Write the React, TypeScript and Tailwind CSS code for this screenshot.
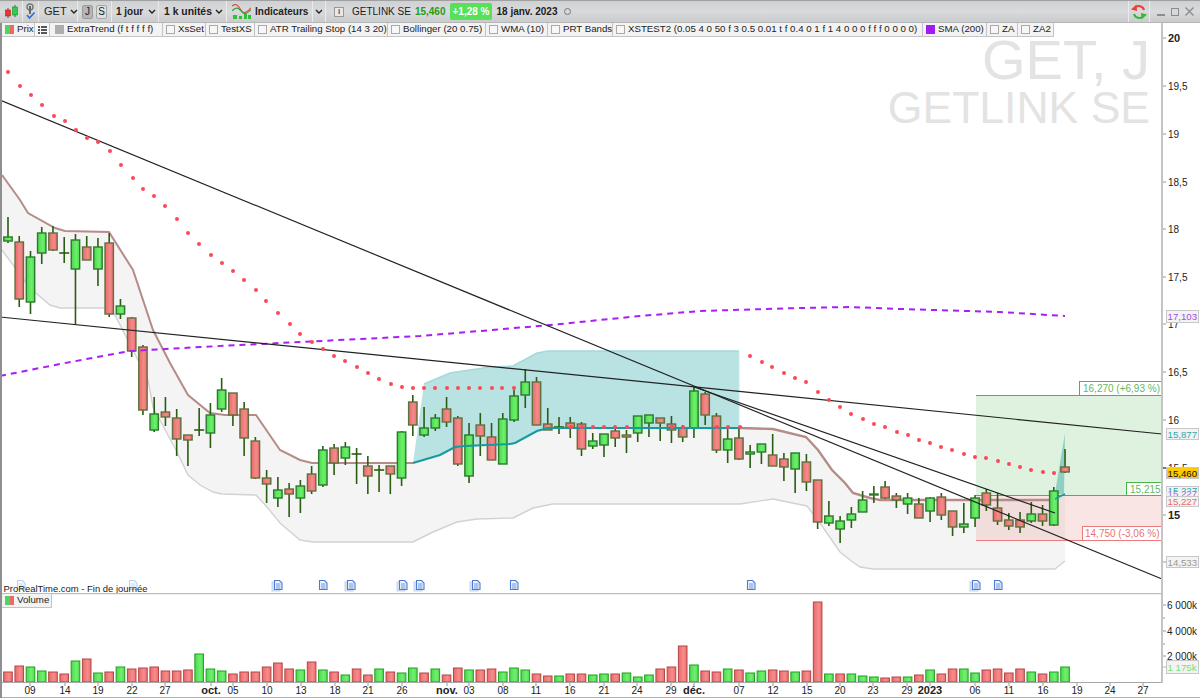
import React from "react";

const FONT = { fontFamily: '"Liberation Sans", Arial, sans-serif' };

const xOf = (i: number) => 8 + i * 11.245;

// wick top, body top, body bottom, wick bottom, colour (d = doji)
const candles: [number, number, number, number, string][] = [
  [217, 237, 241, 243, "g"], [236, 242, 299, 307, "r"], [251, 257, 302, 314, "g"], [227, 233, 253, 264, "g"],
  [226, 233, 250, 251, "r"], [237, 253, 253, 263, "d"], [234, 240, 269, 324, "g"], [236, 247, 260, 260, "r"],
  [238, 247, 269, 286, "g"], [233, 243, 314, 317, "r"], [299, 306, 314, 319, "g"], [317, 318, 351, 357, "r"],
  [345, 347, 410, 415, "r"], [397, 414, 430, 432, "g"], [397, 412, 417, 426, "r"], [409, 418, 439, 456, "r"],
  [435, 435, 440, 466, "r"], [408, 430, 430, 436, "d"], [403, 415, 433, 448, "g"], [378, 390, 409, 412, "g"],
  [393, 393, 415, 426, "r"], [402, 409, 438, 456, "r"], [437, 441, 478, 479, "r"], [470, 478, 484, 503, "r"],
  [477, 490, 498, 507, "g"], [483, 489, 494, 517, "r"], [480, 486, 498, 513, "g"], [466, 474, 491, 494, "r"],
  [446, 450, 485, 487, "g"], [444, 448, 463, 475, "r"], [442, 447, 458, 465, "g"], [448, 454, 454, 484, "d"],
  [456, 466, 476, 494, "r"], [465, 470, 470, 492, "d"], [466, 466, 474, 494, "r"], [431, 432, 478, 486, "g"],
  [395, 402, 425, 436, "r"], [407, 428, 435, 437, "g"], [414, 418, 428, 431, "g"], [397, 409, 422, 427, "r"],
  [416, 418, 464, 466, "r"], [423, 435, 476, 483, "g"], [413, 425, 436, 456, "r"], [423, 437, 460, 460, "r"],
  [413, 419, 464, 464, "g"], [390, 396, 420, 422, "g"], [369, 382, 395, 408, "g"], [377, 382, 425, 425, "r"],
  [408, 424, 430, 430, "r"], [417, 427, 427, 434, "d"], [417, 423, 428, 438, "r"], [422, 424, 449, 456, "r"],
  [433, 441, 446, 449, "g"], [434, 434, 445, 457, "g"], [428, 431, 438, 447, "r"], [430, 435, 437, 453, "r"],
  [416, 416, 433, 442, "g"], [415, 415, 423, 437, "g"], [418, 418, 423, 441, "r"], [416, 424, 430, 443, "r"],
  [425, 428, 437, 442, "r"], [387, 391, 428, 438, "g"], [392, 394, 415, 425, "r"], [413, 416, 450, 453, "r"],
  [427, 439, 450, 463, "g"], [427, 438, 459, 460, "r"], [445, 452, 454, 468, "g"], [444, 444, 452, 464, "g"],
  [434, 455, 466, 466, "r"], [453, 459, 467, 481, "r"], [453, 453, 469, 493, "g"], [454, 462, 482, 491, "r"],
  [480, 480, 522, 529, "r"], [501, 516, 523, 526, "g"], [516, 521, 529, 543, "g"], [507, 514, 520, 528, "g"],
  [491, 500, 512, 512, "g"], [486, 494, 495, 503, "g"], [481, 487, 498, 499, "r"], [493, 496, 500, 508, "r"],
  [493, 498, 504, 514, "g"], [498, 504, 518, 518, "r"], [497, 498, 511, 522, "g"], [493, 497, 515, 520, "r"],
  [511, 511, 527, 536, "r"], [503, 524, 527, 533, "g"], [495, 498, 518, 527, "g"], [489, 493, 505, 511, "r"],
  [493, 508, 521, 525, "r"], [513, 520, 526, 530, "r"], [512, 520, 527, 533, "r"], [502, 514, 521, 523, "g"],
  [505, 514, 521, 526, "r"], [487, 491, 525, 526, "g"], [449, 467, 472, 473, "r"],
];

// volume bar tops, colour
const volumes: [number, string][] = [
  [672, "r"], [666, "r"], [667, "g"], [671, "g"], [672, "r"], [674, "r"], [661, "g"], [659, "r"], [673, "g"], [672, "r"],
  [667, "g"], [669, "r"], [668, "r"], [667, "r"], [671, "r"], [671, "r"], [670, "r"], [654, "g"], [669, "g"], [671, "g"],
  [674, "r"], [672, "r"], [672, "r"], [667, "r"], [663, "r"], [669, "r"], [670, "g"], [662, "r"], [670, "g"], [672, "r"],
  [675, "g"], [669, "r"], [675, "r"], [669, "g"], [672, "r"], [673, "g"], [668, "g"], [673, "r"], [669, "g"], [675, "r"],
  [668, "r"], [670, "g"], [670, "r"], [669, "r"], [672, "g"], [668, "g"], [670, "g"], [674, "r"], [676, "r"], [676, "g"],
  [674, "r"], [674, "r"], [675, "g"], [674, "g"], [674, "r"], [673, "g"], [677, "g"], [675, "g"], [669, "r"], [667, "r"],
  [646, "r"], [665, "g"], [671, "r"], [672, "r"], [669, "g"], [670, "r"], [673, "g"], [671, "g"], [670, "r"], [671, "r"],
  [672, "g"], [671, "r"], [602, "r"], [674, "g"], [674, "r"], [674, "g"], [676, "g"], [677, "g"], [678, "r"], [677, "r"],
  [677, "g"], [675, "r"], [670, "g"], [674, "r"], [669, "r"], [669, "g"], [673, "g"], [670, "r"], [669, "r"], [673, "r"],
  [669, "r"], [672, "g"], [674, "r"], [672, "g"], [667, "g"],
];

const upper = "2,175 20,200 28,213 55,228 65,231 109,232 133,270 153,330 170,363 188,395 210,413 225,415 256,415 280,450 300,460 312,463 413,463";
const teal = "413,463 440,455 455,447 465,446 510,444 515,443 537,431 548,428 740,428";
const upperEnd = "740,428 773,429 806,437 818,450 832,470 845,483 853,493 870,498 880,500 1055,500";
const lower = "2,250 30,288 50,305 60,308 109,308 115,315 148,380 153,407 177,452 188,475 200,485 213,492 222,494 256,495 267,507 280,523 300,540 313,542 413,542 433,532 457,522 477,519 513,518 533,508 553,504 740,504 773,499 807,506 820,523 840,552 850,560 860,567 873,569 1055,569 1065,561";
const cloud = "413,463 424,384 450,373 490,367 513,366 537,353 548,351 739,351 739,428 548,428 537,431 515,443 510,444 465,446 455,447 440,455";
const sma = "0,376 60,364 130,351 200,347 300,342 420,336 480,331 550,325 640,316 700,311 800,308 850,307 900,309 1000,312 1065,316";

const dotsA = [
  [8, 72], [20, 86], [31, 95], [42, 105], [54, 116], [65, 121], [76, 130], [87, 138], [98, 142], [110, 151], [121, 165], [133, 178], [143, 189], [154, 196], [165, 206],
  [177, 219], [188, 233], [199, 244], [211, 255], [222, 263], [233, 271], [244, 280], [256, 290], [266, 301], [278, 313], [290, 324], [300, 334],
  [312, 342], [323, 349], [334, 356], [345, 361], [357, 367], [368, 373], [379, 379], [391, 384], [402, 387],
  [413, 388], [424, 388], [435, 388], [447, 388], [458, 388], [469, 388], [480, 388], [492, 388], [502, 388], [514, 388],
  [571, 427], [582, 427], [593, 427], [604, 427], [615, 427], [627, 427], [672, 427], [683, 427], [717, 427], [728, 427], [740, 427],
  [750, 356], [762, 362], [772, 367], [784, 373], [795, 378], [806, 382], [818, 392], [829, 400], [840, 407], [851, 414], [863, 419], [874, 424],
  [885, 427], [897, 432], [908, 435], [919, 440], [930, 443], [941, 447], [952, 450], [964, 454], [975, 457], [986, 458], [998, 461], [1009, 464], [1020, 467], [1031, 470], [1043, 472], [1054, 473],
];

const priceAxis: [string, number, boolean][] = [
  ["20", 38, true], ["19,5", 86, false], ["19", 134, false], ["18,5", 182, false], ["18", 229, false], ["17,5", 277, false],
  ["17", 324, false], ["16,5", 372, false], ["16", 420, false], ["15,5", 468, false], ["15", 515, true],
];

const dates: [string, number, boolean][] = [
  ["09", 30, false], ["14", 65, false], ["19", 98, false], ["22", 132, false], ["27", 165, false], ["oct.", 211, true], ["05", 233, false],
  ["10", 267, false], ["13", 301, false], ["18", 335, false], ["21", 368, false], ["26", 402, false], ["nov.", 447, true], ["03", 469, false],
  ["08", 503, false], ["11", 536, false], ["16", 570, false], ["21", 604, false], ["24", 637, false], ["29", 671, false], ["déc.", 694, true],
  ["07", 739, false], ["12", 773, false], ["15", 807, false], ["20", 840, false], ["23", 873, false], ["29", 907, false], ["2023", 930, true],
  ["06", 975, false], ["11", 1009, false], ["16", 1043, false], ["19", 1077, false], ["24", 1110, false], ["27", 1143, false],
];

const notes: [number, boolean][] = [
  [278, true], [323, false], [351, true], [403, true], [420, true], [476, true], [514, false], [751, false], [976, true], [998, false],
];

function Note({ x, double }: { x: number; double: boolean }) {
  return (
    <g transform={`translate(${x - 4} 580)`}>
      {double && <rect x={-2} y={2} width={8} height={9} fill="#dbe6f8" stroke="#b5cbee" strokeWidth={0.8} />}
      <path d="M0.5 0.5H5.5L8 3V9.5H0.5Z" fill="#eef3fc" stroke="#4a7bd6" strokeWidth={1.1} />
      <path d="M2 4H6.5M2 6H6.5M2 8H6.5" stroke="#4a7bd6" strokeWidth={0.8} />
    </g>
  );
}

function Chart() {
  return (
    <svg viewBox="0 23 1200 570" className="block h-[570px] w-[1200px]" style={FONT}>
      <defs>
        <linearGradient id="gb">
          <stop offset="0" stopColor="#4bd64b" />
          <stop offset="0.6" stopColor="#6cf06c" />
          <stop offset="1" stopColor="#50dc50" />
        </linearGradient>
        <linearGradient id="rb">
          <stop offset="0" stopColor="#e86a6a" />
          <stop offset="0.6" stopColor="#f58a8a" />
          <stop offset="1" stopColor="#e86e6e" />
        </linearGradient>
      </defs>

      <text x={1150} y={79} textAnchor="end" fontSize={56} fill="#e3e3e3">GET, J</text>
      <text x={1150} y={123} textAnchor="end" fontSize={44.5} fill="#e3e3e3">GETLINK SE</text>

      <polygon points={`${upper} ${teal.split(" ").slice(1).join(" ")} ${upperEnd.split(" ").slice(1).join(" ")} 1065,495 ${lower.split(" ").reverse().join(" ")}`} fill="#f4f4f4" />
      <polyline points={lower} fill="none" stroke="#d2d2d2" strokeWidth={1.4} />

      <polygon points={cloud} fill="#b9e3e3" />
      <polyline points="424,384 450,373 490,367 513,366 537,353 548,351 739,351" fill="none" stroke="#a5d9d9" strokeWidth={1.5} />
      <line x1={739} y1={351} x2={739} y2={428} stroke="#c6eaea" strokeWidth={1} />

      <rect x={976} y={395} width={186} height={100} fill="#dff2df" />
      <rect x={976} y={495} width={186} height={45} fill="#f0a8a8" fillOpacity={0.3} />
      <line x1={976} y1={395.5} x2={1162} y2={395.5} stroke="#47b847" />
      <line x1={976} y1={495.5} x2={1162} y2={495.5} stroke="#47b847" />
      <line x1={976} y1={540.5} x2={1162} y2={540.5} stroke="#ec7a7a" />
      <polygon points="1055,493 1065,433 1064,495" fill="#8fd0c4" />

      <polyline points={upper} fill="none" stroke="#b58c88" strokeWidth={2} />
      <polyline points={upperEnd} fill="none" stroke="#b58c88" strokeWidth={2.4} />

      {candles.map(([wt, bt, bb, wb, c], i) => {
        const x = xOf(i);
        return (
          <g key={i}>
            <line x1={x} y1={wt} x2={x} y2={wb} stroke="#2a5c12" strokeWidth={1.6} />
            {c === "d" ? (
              <line x1={x - 5} y1={bt} x2={x + 5} y2={bt} stroke="#2a5c12" strokeWidth={1.6} />
            ) : (
              <rect
                x={x - 4.2}
                y={bt}
                width={8.4}
                height={bb - bt}
                fill={c === "g" ? "url(#gb)" : "url(#rb)"}
                stroke={c === "g" ? "#2c7a2c" : "#60703c"}
                strokeWidth={1.4}
              />
            )}
          </g>
        );
      })}

      <polyline points={teal} fill="none" stroke="#159a9f" strokeWidth={2} />
      <polyline points="1055,499 1065,494" fill="none" stroke="#159a9f" strokeWidth={1.5} />

      <polyline points={sma} fill="none" stroke="#a81ff5" strokeWidth={2} strokeDasharray="6 5" />

      <line x1={0} y1={100} x2={1162} y2={579} stroke="#222" strokeWidth={1.2} />
      <line x1={0} y1={317} x2={1162} y2={434} stroke="#222" strokeWidth={1.2} />
      <line x1={694} y1={387} x2={1055} y2={513} stroke="#222" strokeWidth={1.2} />

      {dotsA.map(([x, y], i) => (
        <circle key={i} cx={x} cy={y} r={2} fill="#ff4757" />
      ))}

      <g opacity={0.35}>
        <Note x={21} double={false} />
        <Note x={133} double={false} />
      </g>
      {notes.map(([x, d], i) => (
        <Note key={i} x={x} double={d} />
      ))}
      <text x={3.5} y={592} fontSize={9.45} fill="#222">ProRealTime.com - Fin de journée</text>

      <rect x={1079.5} y={381.5} width={82} height={14} fill="#fff" stroke="#47b847" />
      <text x={1083} y={392} fontSize={10} fill="#63b863">16,270 (+6,93 %)</text>
      <rect x={1126.5} y={482.5} width={35} height={13} fill="#fff" stroke="#47b847" />
      <text x={1130} y={492.5} fontSize={10} fill="#63b863">15,215</text>
      <rect x={1082.5} y={526.5} width={79} height={14} fill="#fff" stroke="#ec7a7a" />
      <text x={1085} y={537} fontSize={10} fill="#ea7272">14,750 (-3,06 %)</text>

      <rect x={1162} y={23} width={38} height={570} fill="#fff" />
      <rect x={1161} y={23} width={2} height={570} fill="#c4c4c4" />
      {priceAxis.map(([t, y, b]) => (
        <g key={t}>
          <line x1={1163} y1={y} x2={1166} y2={y} stroke="#999" />
          <text x={1168} y={y + 4} fontSize={b ? 11 : 10} fontWeight={b ? 700 : 400} fill="#222">{t}</text>
        </g>
      ))}
      <line x1={1163} y1={468} x2={1166} y2={468} stroke="#222" />
      <line x1={1163} y1={562} x2={1166} y2={562} stroke="#999" />

      <rect x={1166.5} y={310.5} width={32} height={12} fill="#f3f3f3" stroke="#c8c8c8" />
      <text x={1167.5} y={320} fontSize={9.7} fill="#a84ae8">17,103</text>
      <rect x={1166.5} y={428.5} width={32} height={11} fill="#f3f3f3" stroke="#c8c8c8" />
      <text x={1167.5} y={438} fontSize={9.7} fill="#2ea8ad">15,877</text>
      <rect x={1166.5} y={486.5} width={32} height={9} fill="#f3f3f3" stroke="#c8c8c8" />
      <text x={1167.5} y={494} fontSize={9.7} fill="#2ea8ad">15,227</text>
      <rect x={1166.5} y={491.5} width={32} height={5} fill="#f3f3f3" />
      <text x={1167.5} y={497} fontSize={9.7} fill="#8a6ae8">15,227</text>
      <rect x={1166.5} y={496.5} width={32} height={10} fill="#f3f3f3" stroke="#c8c8c8" />
      <text x={1167.5} y={505} fontSize={9.7} fill="#ea6a6a">15,227</text>
      <rect x={1166.5} y={467.5} width={32} height={11} fill="#ffcb05" stroke="#c8c8c8" />
      <text x={1167.5} y={477} fontSize={9.7} fill="#111">15,460</text>
      <rect x={1166.5} y={556.5} width={32} height={11} fill="#f3f3f3" stroke="#c8c8c8" />
      <text x={1167.5} y={566} fontSize={9.7} fill="#999">14,533</text>
    </svg>
  );
}

function Volume() {
  return (
    <svg viewBox="0 593 1200 105" className="block h-[105px] w-[1200px]" style={FONT}>
      <defs>
        <linearGradient id="vg">
          <stop offset="0" stopColor="#4fd84f" />
          <stop offset="0.6" stopColor="#70f070" />
          <stop offset="1" stopColor="#50dc50" />
        </linearGradient>
        <linearGradient id="vr">
          <stop offset="0" stopColor="#e96a6a" />
          <stop offset="0.6" stopColor="#f78c8c" />
          <stop offset="1" stopColor="#e86e6e" />
        </linearGradient>
      </defs>
      <line x1={0} y1={593.5} x2={1162} y2={593.5} stroke="#bdbdbd" strokeWidth={1.5} />
      {volumes.map(([t, c], i) => (
        <rect
          key={i}
          x={xOf(i) - 4.3}
          y={t}
          width={8.6}
          height={682 - t}
          fill={c === "g" ? "url(#vg)" : "url(#vr)"}
          stroke={c === "g" ? "#1f9f1f" : "#b54545"}
          strokeWidth={1}
        />
      ))}
      <line x1={0} y1={682.5} x2={1162} y2={682.5} stroke="#a8a8a8" />
      <rect x={1161} y={593} width={2} height={90} fill="#c4c4c4" />
      {[618, 644].map((y) => (
        <line key={y} x1={1163} y1={y} x2={1165} y2={y} stroke="#999" />
      ))}
      {[["6 000k", 605], ["4 000k", 631], ["2 000k", 656]].map(([t, y]) => (
        <g key={t as string}>
          <line x1={1163} y1={y as number} x2={1166} y2={y as number} stroke="#999" />
          <text x={1167} y={(y as number) + 4} fontSize={10} fill="#222">{t}</text>
        </g>
      ))}
      <line x1={1163} y1={667} x2={1166} y2={667} stroke="#77dd77" />
      <rect x={1166.5} y={660.5} width={32} height={13} fill="#f3f3f3" stroke="#c8c8c8" />
      <text x={1167.5} y={671} fontSize={9.7} fill="#7ae07a">1 175k</text>
      {dates.map(([t, x, b]) => (
        <g key={t + x}>
          <line x1={x} y1={683} x2={x} y2={686} stroke="#999" />
          <text x={x} y={694} textAnchor="middle" fontSize={b ? 11 : 10} fontWeight={b ? 700 : 400} fill="#222">{t}</text>
        </g>
      ))}
      <line x1={0} y1={697.5} x2={1200} y2={697.5} stroke="#b0b0b0" />
    </svg>
  );
}

function Swatch() {
  return (
    <span className="flex h-[9px] w-[9px] shrink-0">
      <span className="w-1/2 bg-[#4fd65a]" />
      <span className="w-1/2 bg-[#ea6a6a]" />
    </span>
  );
}

function Box() {
  return <span className="h-[9px] w-[9px] shrink-0 border border-[#aaaaaa] bg-[#f7f7f7]" />;
}

function Legend({ w, mark, label }: { w: string; mark: React.ReactNode; label?: string }) {
  return (
    <div className={`flex h-[14px] shrink-0 items-center gap-[3px] overflow-hidden whitespace-nowrap border-r border-b border-[#c4c4c4] bg-[#f3f3f3] pl-[3px] ${w}`}>
      {mark}
      {label && <span>{label}</span>}
    </div>
  );
}

function Chevron() {
  return (
    <svg width="8" height="5" viewBox="0 0 8 5" className="shrink-0">
      <path d="M1 1L4 4L7 1" fill="none" stroke="#222" strokeWidth="1.4" />
    </svg>
  );
}

function ToolbarSeg({ w, children, className = "" }: { w: string; children?: React.ReactNode; className?: string }) {
  return (
    <div className={`flex h-full shrink-0 items-center border-r border-[#e9eaea] ${w} ${className}`}>{children}</div>
  );
}

export default function App() {
  return (
    <div className="relative flex h-[698px] w-[1200px] flex-col overflow-hidden bg-white text-[#222]" style={FONT}>
      {/* Top toolbar */}
      <div className="flex h-[23px] shrink-0 items-center border-t border-b border-t-[#9ea0a2] border-b-[#b4b6b8] bg-gradient-to-b from-[#cfd1d2] via-[#d9dadb] to-[#c9cbcc] text-[10px]">
        <ToolbarSeg w="w-[23px]" className="justify-center">
          <svg width="15" height="14" viewBox="0 0 15 14">
            <path d="M4 3V13M11 0V12" stroke="#555" strokeWidth="1" />
            <rect x="1.5" y="5" width="5" height="6" fill="#ee3333" stroke="#a22" strokeWidth="0.6" />
            <rect x="8.5" y="2" width="5" height="8" fill="#33cc44" stroke="#1a8a2a" strokeWidth="0.6" />
          </svg>
        </ToolbarSeg>
        <ToolbarSeg w="w-[16px]" className="justify-center">
          <svg width="11" height="17" viewBox="0 0 11 17">
            <circle cx="5" cy="4" r="3" fill="none" stroke="#777" strokeWidth="1.4" />
            <path d="M5 3V11" stroke="#666" strokeWidth="2" />
            <path d="M2 12L4.5 15L9.5 9.5" fill="none" stroke="#2a6fd6" strokeWidth="1.6" />
          </svg>
        </ToolbarSeg>
        <ToolbarSeg w="w-[39px]" className="gap-[3px] pl-[5px]">
          <span className="text-[11px]">GET</span>
          <Chevron />
        </ToolbarSeg>
        <ToolbarSeg w="w-[34px]" className="gap-[3px] pl-[4px]">
          <span className="flex h-[14px] w-[11px] items-center justify-center rounded-[2px] border border-[#9a9a9a] bg-[#b4b6b8] text-[10px]">J</span>
          <span className="flex h-[14px] w-[11px] items-center justify-center rounded-[2px] border border-[#a6a6a6] bg-[#dedfe0] text-[10px]">S</span>
        </ToolbarSeg>
        <ToolbarSeg w="w-[47px]" className="gap-[5px] pl-[4px] font-bold">
          <span>1 jour</span>
          <Chevron />
        </ToolbarSeg>
        <ToolbarSeg w="w-[68px]" className="gap-[3px] pl-[5px] font-bold">
          <span className="text-[10.4px] whitespace-nowrap">1 k unités</span>
          <Chevron />
        </ToolbarSeg>
        <ToolbarSeg w="w-[86px]" className="gap-[4px] pl-[5px] font-bold">
          <svg width="19" height="17" viewBox="0 0 19 17" className="shrink-0">
            <path d="M0 3C4 0 6 2 9 7S15 9 19 5" fill="none" stroke="#e04a3a" strokeWidth="1.2" />
            <path d="M0 8C4 3 7 5 10 9S16 9 19 7" fill="none" stroke="#3aa050" strokeWidth="1.2" />
            <path d="M1 16V12H5V16ZM7 16V13H10V16ZM12 16V11H15V16ZM16 16V12H19V16Z" fill="#2fbf3a" />
          </svg>
          <span>Indicateurs</span>
        </ToolbarSeg>
        <ToolbarSeg w="w-[13px]" className="justify-center">
          <Chevron />
        </ToolbarSeg>
        <div className="flex h-full min-w-0 flex-1 items-center gap-[4px] whitespace-nowrap pl-[8px]">
          <span className="mr-[4px] flex h-[10px] w-[10px] items-center justify-center border border-[#999] bg-[#e8e8e8] text-[8px] font-bold text-[#555]">i</span>
          <span>GETLINK SE</span>
          <span className="font-bold text-[#2a9a14]">15,460</span>
          <span className="rounded-[2px] bg-[#58e058] px-[3px] py-[1px] font-bold text-white">+1,28 %</span>
          <span className="font-bold">18 janv. 2023</span>
          <span className="ml-[3px] h-[7px] w-[7px] rounded-full border border-[#777]" />
        </div>
        <div className="flex h-full w-[22px] shrink-0 items-center justify-center border-x border-[#e9eaea]">
          <svg width="16" height="16" viewBox="0 0 16 16">
            <path d="M13 6A5.5 5.5 0 0 0 4 3.5" fill="none" stroke="#e8403a" strokeWidth="2.2" />
            <path d="M0 5.5L5.5 0.5L6 7Z" fill="#e8403a" />
            <path d="M3 10A5.5 5.5 0 0 0 12 12.5" fill="none" stroke="#35b83a" strokeWidth="2.2" />
            <path d="M16 10.5L10.5 15.5L10 9Z" fill="#35b83a" />
          </svg>
        </div>
        <div className="flex w-[50px] shrink-0 items-center justify-center gap-[6px]">
          <span className="mt-[7px] h-[2px] w-[8px] bg-[#8c8c8c]" />
          <span className="h-[8px] w-[8px] border border-[#8c8c8c]" />
          <svg width="9" height="9" viewBox="0 0 9 9">
            <path d="M0.5 0.5L8.5 8.5M8.5 0.5L0.5 8.5" stroke="#8c8c8c" strokeWidth="1.4" />
          </svg>
        </div>
      </div>

      {/* Price panel */}
      <div className="relative h-[570px] shrink-0">
        <Chart />
        <div className="absolute left-[2px] top-0 flex text-[9.7px]">
          <Legend w="w-[33px]" mark={<Swatch />} label="Prix" />
          <div className="flex h-[14px] w-[15px] shrink-0 items-center justify-center border-r border-b border-[#c4c4c4] bg-[#f8f8f8]">
            <svg width="9" height="8" viewBox="0 0 9 8">
              <path d="M0 1H2M3 1H9M0 4H2M3 4H9M0 7H2M3 7H9" stroke="#222" strokeWidth="1.3" />
            </svg>
          </div>
          <Legend w="w-[113px]" mark={<span className="ml-[2px] h-[9px] w-[9px] shrink-0 bg-[#adadad]" />} label="ExtraTrend (f t f f f f)" />
          <Legend w="w-[43px]" mark={<Box />} label="XsSet" />
          <Legend w="w-[49px]" mark={<Box />} label="TestXS" />
          <Legend w="w-[133px]" mark={<Box />} label="ATR Trailing Stop (14 3 20)" />
          <Legend w="w-[98px]" mark={<Box />} label="Bollinger (20 0.75)" />
          <Legend w="w-[62px]" mark={<Box />} label="WMA (10)" />
          <Legend w="w-[65px]" mark={<Box />} label="PRT Bands" />
          <Legend w="w-[310px]" mark={<Box />} label="XSTEST2 (0.05 4 0 50 f 3 0.5 0.01 t f 0.4 0 1 f 1 4 0 0 0 f f f 0 0 0 0)" />
          <Legend w="w-[64px]" mark={<span className="h-[9px] w-[9px] shrink-0 bg-[#a31bf2]" />} label="SMA (200)" />
          <Legend w="w-[31px]" mark={<Box />} label="ZA" />
          <Legend w="w-[36px]" mark={<Box />} label="ZA2" />
        </div>
      </div>

      {/* Volume panel */}
      <div className="relative h-[105px] shrink-0">
        <Volume />
        <div className="absolute left-[2px] top-[1px] text-[9.7px]">
          <Legend w="w-[50px]" mark={<Swatch />} label="Volume" />
        </div>
      </div>

      {/* Window edge */}
      <div className="pointer-events-none absolute bottom-0 left-0 top-[23px] w-[2px] bg-[#8f8f8f]" />
    </div>
  );
}
